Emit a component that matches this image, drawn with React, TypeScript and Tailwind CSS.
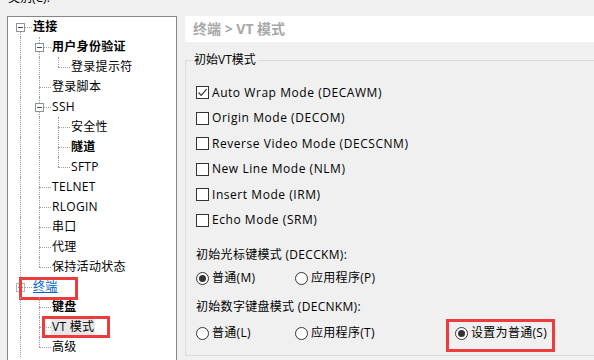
import React from "react";

type Node = {
  label: string;
  level: number;
  guides: boolean[]; // ancestor columns that carry a vertical line
  last: boolean;
  first?: boolean;
  expander?: boolean;
  bold?: boolean;
  hot?: boolean;
  selected?: boolean;
};

const tree: Node[] = [
  { label: "连接", level: 0, guides: [], last: false, first: true, expander: true, bold: true },
  { label: "用户身份验证", level: 1, guides: [true], last: false, expander: true, bold: true },
  { label: "登录提示符", level: 2, guides: [true, true], last: true },
  { label: "登录脚本", level: 1, guides: [true], last: false },
  { label: "SSH", level: 1, guides: [true], last: false, expander: true },
  { label: "安全性", level: 2, guides: [true, true], last: false },
  { label: "隧道", level: 2, guides: [true, true], last: false, bold: true },
  { label: "SFTP", level: 2, guides: [true, true], last: true },
  { label: "TELNET", level: 1, guides: [true], last: false },
  { label: "RLOGIN", level: 1, guides: [true], last: false },
  { label: "串口", level: 1, guides: [true], last: false },
  { label: "代理", level: 1, guides: [true], last: false },
  { label: "保持活动状态", level: 1, guides: [true], last: true },
  { label: "终端", level: 0, guides: [], last: false, expander: true, hot: true },
  { label: "键盘", level: 1, guides: [true], last: false, bold: true },
  { label: "VT 模式", level: 1, guides: [true], last: false, selected: true },
  { label: "高级", level: 1, guides: [true], last: true },
];

const checks = [
  { label: "Auto Wrap Mode (DECAWM)", on: true },
  { label: "Origin Mode (DECOM)", on: false },
  { label: "Reverse Video Mode (DECSCNM)", on: false },
  { label: "New Line Mode (NLM)", on: false },
  { label: "Insert Mode (IRM)", on: false },
  { label: "Echo Mode (SRM)", on: false },
];

const font = { fontFamily: '"Open Sans", "Noto Sans CJK SC", sans-serif' };

const Guide = ({ line }: { line: boolean }) => (
  <div className="relative w-[19px] h-full shrink-0">
    {line && <div className="absolute left-[9px] top-0 bottom-0 border-l border-dotted border-[#a0a0a0]" />}
  </div>
);

const Connector = ({ node }: { node: Node }) => (
  <div className="relative w-[19px] h-full shrink-0">
    <div
      className={`absolute left-[9px] border-l border-dotted border-[#a0a0a0] ${node.first ? "top-[10px]" : "top-0"} ${node.last ? "h-[10px]" : "bottom-0"}`}
    />
    <div className="absolute left-[9px] right-[-2px] top-[10px] border-t border-dotted border-[#a0a0a0]" />
    {node.expander && (
      <div
        className={`absolute left-[5px] top-[6px] w-[9px] h-[9px] bg-white border flex items-center justify-center ${node.hot ? "border-[#b4b4b4]" : "border-[#919191]"}`}
      >
        <div className={`w-[5px] h-px ${node.hot ? "bg-[#8a8a8a]" : "bg-[#2f4a86]"}`} />
      </div>
    )}
  </div>
);

const TreeRow = ({ node, index }: { node: Node; index: number }) => (
  <div className="relative flex h-[20px] items-stretch pl-[3px]">
    {node.guides.map((g, i) => (
      <Guide key={i} line={g} />
    ))}
    <Connector node={node} />
    <div className="flex items-center pl-[2px]">
      <span
        className={`px-[1px] text-[12px] leading-[18px] tracking-[0.3px] ${node.bold ? "font-bold" : ""} ${node.hot ? "text-[#0066cc] underline" : "text-black"} ${node.selected ? "bg-[#e8e8e8]" : ""}`}
      >
        {node.label}
      </span>
    </div>
    {index === 13 && <div className="absolute left-[11px] top-0 w-[59px] h-[23px] border-[3px] border-[#ee3b3b]" />}
    {index === 15 && <div className="absolute left-[34px] top-[-1px] w-[68px] h-[22px] border-[3px] border-[#ee3b3b]" />}
  </div>
);

const CheckBox = ({ on }: { on: boolean }) => (
  <div className="w-[13px] h-[13px] border border-[#333333] bg-white flex items-center justify-center shrink-0">
    {on && (
      <svg width="11" height="11" viewBox="0 0 11 11">
        <path d="M1.5 5.5 L4.2 8.3 L9.6 2.2" fill="none" stroke="#333" strokeWidth="1.2" />
      </svg>
    )}
  </div>
);

const Radio = ({ on }: { on: boolean }) => (
  <div className="w-[13px] h-[13px] rounded-full border border-[#333333] bg-white flex items-center justify-center shrink-0">
    {on && <div className="w-[7px] h-[7px] rounded-full bg-[#333333]" />}
  </div>
);

const RadioItem = ({ label, on, width }: { label: string; on: boolean; width: string }) => (
  <div className={`flex items-center gap-[3px] ${width}`}>
    <Radio on={on} />
    <span className="text-[12px] leading-[18px] tracking-[0.3px] text-black">{label}</span>
  </div>
);

export default function App() {
  return (
    <div className="relative w-[594px] h-[360px] overflow-hidden bg-[#f0f0f0]" style={font}>
      <div className="h-[16px] pl-[8px] text-[12px] leading-[16px] text-black -translate-y-[10px]">类别(C):</div>
      <div className="flex">
        <div className="ml-[7px] w-[170px] h-[360px] shrink-0 border border-[#828790] bg-white">
          {tree.map((n, i) => (
            <TreeRow key={i} node={n} index={i} />
          ))}
        </div>
        <div className="ml-[8px] flex-1 min-w-0">
          <div className="h-[26px] bg-white pl-[8px] flex items-center">
            <span className="text-[14px] leading-[20px] font-bold text-[#a8a8a8]">终端 &gt; VT 模式</span>
          </div>
          <div className="mt-[18px] w-[430px] h-[296px] border border-[#dcdcdc]">
            <div className="-mt-[9px] ml-[7px] w-fit bg-[#f0f0f0] px-[1px] text-[12px] leading-[16px] text-black">初始VT模式</div>
            <div className="mt-[12px] pl-[10px]">
              {checks.map((c) => (
                <div key={c.label} className="flex items-center gap-[3px] h-[25.5px]">
                  <CheckBox on={c.on} />
                  <span className="text-[12px] leading-[18px] tracking-[0.55px] text-black">{c.label}</span>
                </div>
              ))}
              <div className="mt-[12px] h-[20px] flex items-center text-[12px] tracking-[0.3px] text-black">初始光标键模式 (DECCKM):</div>
              <div className="h-[26px] flex items-center">
                <RadioItem label="普通(M)" on width="w-[99px]" />
                <RadioItem label="应用程序(P)" on={false} width="w-[160px]" />
              </div>
              <div className="mt-[6px] h-[20px] flex items-center text-[12px] tracking-[0.3px] text-black">初始数字键盘模式 (DECNKM):</div>
              <div className="mt-[3px] h-[26px] flex items-center">
                <RadioItem label="普通(L)" on={false} width="w-[99px]" />
                <RadioItem label="应用程序(T)" on={false} width="w-[160px]" />
                <div className="relative">
                  <RadioItem label="设置为普通(S)" on width="w-[100px]" />
                  <div className="absolute left-[-9px] top-[-5px] w-[109px] h-[33px] border-[3px] border-[#ee3b3b]" />
                </div>
              </div>
            </div>
          </div>
        </div>
      </div>
    </div>
  );
}
